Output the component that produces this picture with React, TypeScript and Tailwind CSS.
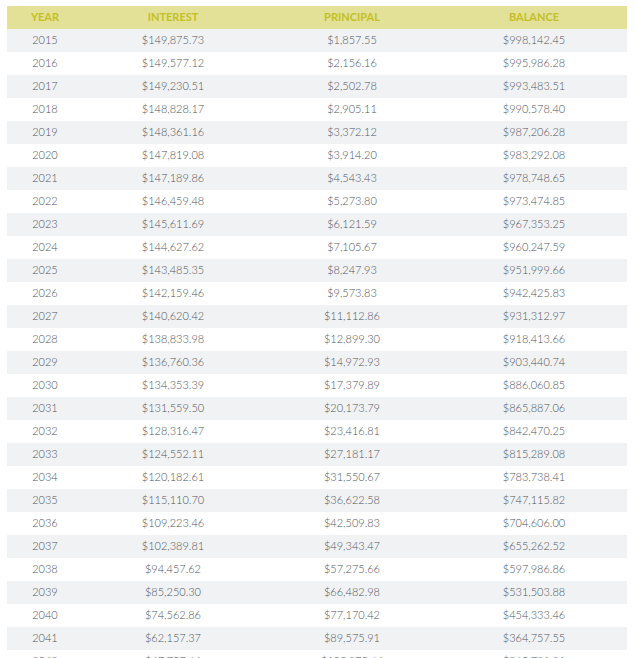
import React from "react";

type Row = { year: number; interest: number; principal: number; balance: number };

const fmt = (n: number) =>
  "$" + n.toLocaleString("en-US", { minimumFractionDigits: 2, maximumFractionDigits: 2 });

const rows: Row[] = [
  [2015, 149875.73, 1857.55, 998142.45],
  [2016, 149577.12, 2156.16, 995986.28],
  [2017, 149230.51, 2502.78, 993483.51],
  [2018, 148828.17, 2905.11, 990578.4],
  [2019, 148361.16, 3372.12, 987206.28],
  [2020, 147819.08, 3914.2, 983292.08],
  [2021, 147189.86, 4543.43, 978748.65],
  [2022, 146459.48, 5273.8, 973474.85],
  [2023, 145611.69, 6121.59, 967353.25],
  [2024, 144627.62, 7105.67, 960247.59],
  [2025, 143485.35, 8247.93, 951999.66],
  [2026, 142159.46, 9573.83, 942425.83],
  [2027, 140620.42, 11112.86, 931312.97],
  [2028, 138833.98, 12899.3, 918413.66],
  [2029, 136760.36, 14972.93, 903440.74],
  [2030, 134353.39, 17379.89, 886060.85],
  [2031, 131559.5, 20173.79, 865887.06],
  [2032, 128316.47, 23416.81, 842470.25],
  [2033, 124552.11, 27181.17, 815289.08],
  [2034, 120182.61, 31550.67, 783738.41],
  [2035, 115110.7, 36622.58, 747115.82],
  [2036, 109223.46, 42509.83, 704606.0],
  [2037, 102389.81, 49343.47, 655262.52],
  [2038, 94457.62, 57275.66, 597986.86],
  [2039, 85250.3, 66482.98, 531503.88],
  [2040, 74562.86, 77170.42, 454333.46],
  [2041, 62157.37, 89575.91, 364757.55],
  [2042, 47757.64, 103975.64, 260781.91],
  [2043, 31043.06, 120690.22, 140091.69],
  [2044, 11641.59, 140091.69, 0.0],
].map(([year, interest, principal, balance]) => ({ year, interest, principal, balance }));

const cols = "grid grid-cols-[76px_180px_178px_186px]";

export default function App() {
  return (
    <div className="bg-white min-h-screen pt-[6px] px-[7px]" style={{ fontFamily: "Lato, 'Open Sans', sans-serif" }}>
      <div className="w-[620px]">
        <div className={`${cols} h-[23px] items-center bg-[#e3e197] text-[#c4c023] text-[11px] font-bold uppercase`}>
          <div className="text-center">Year</div>
          <div className="text-center">Interest</div>
          <div className="text-center">Principal</div>
          <div className="text-center">Balance</div>
        </div>
        {rows.map((r, i) => (
          <div
            key={r.year}
            className={`${cols} h-[23px] items-center text-[11px] font-light text-[#50555c] ${i % 2 === 0 ? "bg-[#f1f2f4]" : "bg-white"}`}
          >
            <div className="text-center">{r.year}</div>
            <div className="text-center">{fmt(r.interest)}</div>
            <div className="text-center">{fmt(r.principal)}</div>
            <div className="text-center">{fmt(r.balance)}</div>
          </div>
        ))}
      </div>
    </div>
  );
}
